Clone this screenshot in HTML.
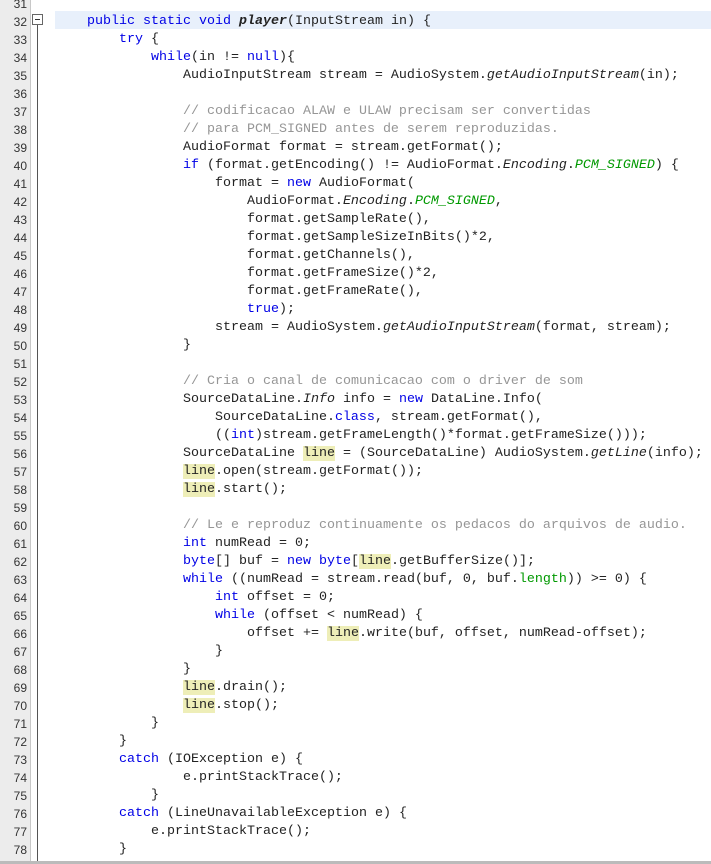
<!DOCTYPE html>
<html><head><meta charset="utf-8"><style>
body{margin:0;width:711px;height:864px;overflow:hidden;background:#fff;position:relative;font-family:"Liberation Mono",monospace;}
#g{position:absolute;left:0;top:0;width:30px;height:864px;background:#ececec;border-right:1px solid #c8c8c8;}
#fl{position:absolute;left:37px;top:24px;width:1px;height:840px;background:#555;}
#fb{position:absolute;left:32px;top:14px;width:9px;height:9px;border:1px solid #666;background:#fff;}
#fb:after{content:"";position:absolute;left:2px;top:4px;width:5px;height:1px;background:#333;}
#hl{position:absolute;left:55px;top:11px;width:656px;height:18px;background:#e8f0fb;}
.r{position:absolute;left:0;height:18px;line-height:18px;font-size:13.33px;white-space:pre;color:#222;margin-top:2px;}
.n{position:absolute;left:0;width:27px;text-align:right;font-family:"Liberation Sans",sans-serif;font-size:12px;color:#333;}
.c{position:absolute;left:55px;}
.k{color:#0000e6}.cm{color:#969696}.i{font-style:italic}.gr{color:#009900;font-style:italic}
.y{background:#eeeeb8}
#bb{position:absolute;left:0;top:861px;width:711px;height:3px;background:#bbb;}
</style></head><body>
<div id="g"></div><div id="hl"></div><div id="fl"></div><div id="fb"></div>
<div class="r" style="top:-7px"><span class="n">31</span></div>
<div class="r" style="top:11px"><span class="n">32</span><span class="c">    <span class="k">public static void</span> <b class="i">player</b>(InputStream in) {</span></div>
<div class="r" style="top:29px"><span class="n">33</span><span class="c">        <span class="k">try</span> {</span></div>
<div class="r" style="top:47px"><span class="n">34</span><span class="c">            <span class="k">while</span>(in != <span class="k">null</span>){</span></div>
<div class="r" style="top:65px"><span class="n">35</span><span class="c">                AudioInputStream stream = AudioSystem.<span class="i">getAudioInputStream</span>(in);</span></div>
<div class="r" style="top:83px"><span class="n">36</span></div>
<div class="r" style="top:101px"><span class="n">37</span><span class="c">                <span class="cm">// codificacao ALAW e ULAW precisam ser convertidas</span></span></div>
<div class="r" style="top:119px"><span class="n">38</span><span class="c">                <span class="cm">// para PCM_SIGNED antes de serem reproduzidas.</span></span></div>
<div class="r" style="top:137px"><span class="n">39</span><span class="c">                AudioFormat format = stream.getFormat();</span></div>
<div class="r" style="top:155px"><span class="n">40</span><span class="c">                <span class="k">if</span> (format.getEncoding() != AudioFormat.<span class="i">Encoding</span>.<span class="gr">PCM_SIGNED</span>) {</span></div>
<div class="r" style="top:173px"><span class="n">41</span><span class="c">                    format = <span class="k">new</span> AudioFormat(</span></div>
<div class="r" style="top:191px"><span class="n">42</span><span class="c">                        AudioFormat.<span class="i">Encoding</span>.<span class="gr">PCM_SIGNED</span>,</span></div>
<div class="r" style="top:209px"><span class="n">43</span><span class="c">                        format.getSampleRate(),</span></div>
<div class="r" style="top:227px"><span class="n">44</span><span class="c">                        format.getSampleSizeInBits()*2,</span></div>
<div class="r" style="top:245px"><span class="n">45</span><span class="c">                        format.getChannels(),</span></div>
<div class="r" style="top:263px"><span class="n">46</span><span class="c">                        format.getFrameSize()*2,</span></div>
<div class="r" style="top:281px"><span class="n">47</span><span class="c">                        format.getFrameRate(),</span></div>
<div class="r" style="top:299px"><span class="n">48</span><span class="c">                        <span class="k">true</span>);</span></div>
<div class="r" style="top:317px"><span class="n">49</span><span class="c">                    stream = AudioSystem.<span class="i">getAudioInputStream</span>(format, stream);</span></div>
<div class="r" style="top:335px"><span class="n">50</span><span class="c">                }</span></div>
<div class="r" style="top:353px"><span class="n">51</span></div>
<div class="r" style="top:371px"><span class="n">52</span><span class="c">                <span class="cm">// Cria o canal de comunicacao com o driver de som</span></span></div>
<div class="r" style="top:389px"><span class="n">53</span><span class="c">                SourceDataLine.<span class="i">Info</span> info = <span class="k">new</span> DataLine.Info(</span></div>
<div class="r" style="top:407px"><span class="n">54</span><span class="c">                    SourceDataLine.<span class="k">class</span>, stream.getFormat(),</span></div>
<div class="r" style="top:425px"><span class="n">55</span><span class="c">                    ((<span class="k">int</span>)stream.getFrameLength()*format.getFrameSize()));</span></div>
<div class="r" style="top:443px"><span class="n">56</span><span class="c">                SourceDataLine <span class="y">line</span> = (SourceDataLine) AudioSystem.<span class="i">getLine</span>(info);</span></div>
<div class="r" style="top:461px"><span class="n">57</span><span class="c">                <span class="y">line</span>.open(stream.getFormat());</span></div>
<div class="r" style="top:479px"><span class="n">58</span><span class="c">                <span class="y">line</span>.start();</span></div>
<div class="r" style="top:497px"><span class="n">59</span></div>
<div class="r" style="top:515px"><span class="n">60</span><span class="c">                <span class="cm">// Le e reproduz continuamente os pedacos do arquivos de audio.</span></span></div>
<div class="r" style="top:533px"><span class="n">61</span><span class="c">                <span class="k">int</span> numRead = 0;</span></div>
<div class="r" style="top:551px"><span class="n">62</span><span class="c">                <span class="k">byte</span>[] buf = <span class="k">new byte</span>[<span class="y">line</span>.getBufferSize()];</span></div>
<div class="r" style="top:569px"><span class="n">63</span><span class="c">                <span class="k">while</span> ((numRead = stream.read(buf, 0, buf.<span class="gr" style="font-style:normal">length</span>)) >= 0) {</span></div>
<div class="r" style="top:587px"><span class="n">64</span><span class="c">                    <span class="k">int</span> offset = 0;</span></div>
<div class="r" style="top:605px"><span class="n">65</span><span class="c">                    <span class="k">while</span> (offset &lt; numRead) {</span></div>
<div class="r" style="top:623px"><span class="n">66</span><span class="c">                        offset += <span class="y">line</span>.write(buf, offset, numRead-offset);</span></div>
<div class="r" style="top:641px"><span class="n">67</span><span class="c">                    }</span></div>
<div class="r" style="top:659px"><span class="n">68</span><span class="c">                }</span></div>
<div class="r" style="top:677px"><span class="n">69</span><span class="c">                <span class="y">line</span>.drain();</span></div>
<div class="r" style="top:695px"><span class="n">70</span><span class="c">                <span class="y">line</span>.stop();</span></div>
<div class="r" style="top:713px"><span class="n">71</span><span class="c">            }</span></div>
<div class="r" style="top:731px"><span class="n">72</span><span class="c">        }</span></div>
<div class="r" style="top:749px"><span class="n">73</span><span class="c">        <span class="k">catch</span> (IOException e) {</span></div>
<div class="r" style="top:767px"><span class="n">74</span><span class="c">                e.printStackTrace();</span></div>
<div class="r" style="top:785px"><span class="n">75</span><span class="c">            }</span></div>
<div class="r" style="top:803px"><span class="n">76</span><span class="c">        <span class="k">catch</span> (LineUnavailableException e) {</span></div>
<div class="r" style="top:821px"><span class="n">77</span><span class="c">            e.printStackTrace();</span></div>
<div class="r" style="top:839px"><span class="n">78</span><span class="c">        }</span></div>
<div id="bb"></div>
</body></html>
